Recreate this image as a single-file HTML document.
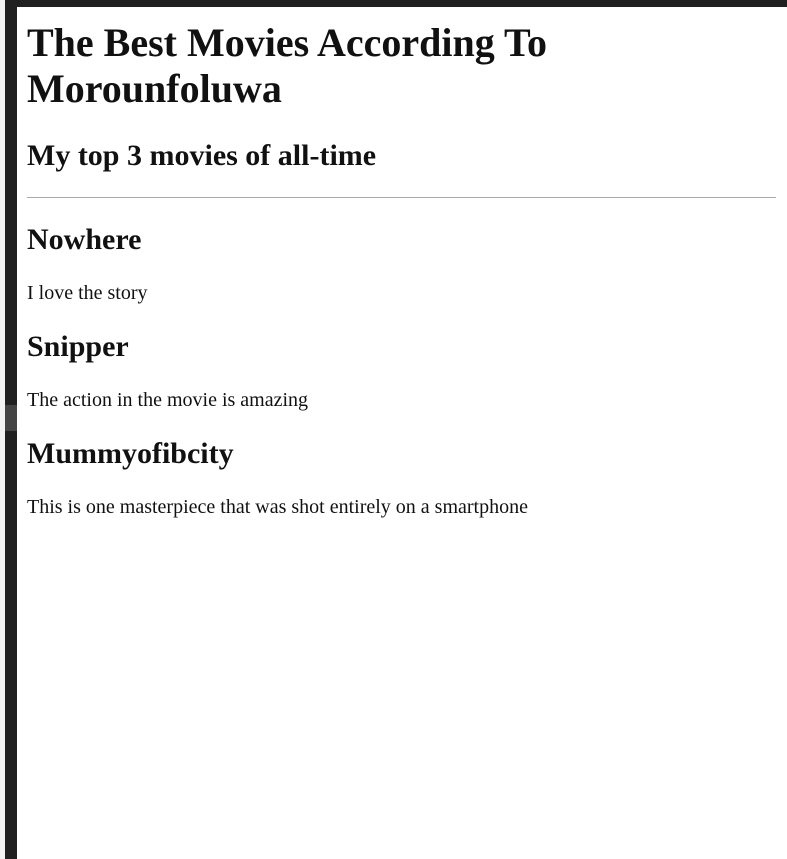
<!DOCTYPE html>
<html><head><style>
html,body{margin:0;padding:0;background:#fff;}
.l0{position:absolute;left:0;top:0;width:5px;height:859px;background:#f3f3f3;}
.l1{position:absolute;left:5px;top:0;width:12px;height:859px;background:#202020;}
.l2{position:absolute;left:5px;top:405px;width:12px;height:26px;background:#444;}
.t{position:absolute;left:5px;top:0;width:782px;height:7px;background:#202020;}
.c{position:absolute;left:13.6px;top:5.6px;width:615px;zoom:1.25;font-family:"Liberation Serif",serif;color:#111;}
.c .in{margin:8px;}
h1{font-size:2em;margin:10.2px 0 0.67em;line-height:1.15;}
h2{font-size:1.5em;margin:0.83em 0;}
hr{margin:0.5em 0;border:0;border-top:1px solid #aaa;}
p{margin:1em 0;}
</style></head><body>
<div class="l0"></div><div class="l1"></div><div class="l2"></div><div class="t"></div>
<div class="c"><div class="in">
<h1>The Best Movies According To Morounfoluwa</h1>
<h2>My top 3 movies of all-time</h2>
<hr>
<h2>Nowhere</h2>
<p>I love the story</p>
<h2>Snipper</h2>
<p>The action in the movie is amazing</p>
<h2>Mummyofibcity</h2>
<p>This is one masterpiece that was shot entirely on a smartphone</p>
</div></div>
</body></html>
